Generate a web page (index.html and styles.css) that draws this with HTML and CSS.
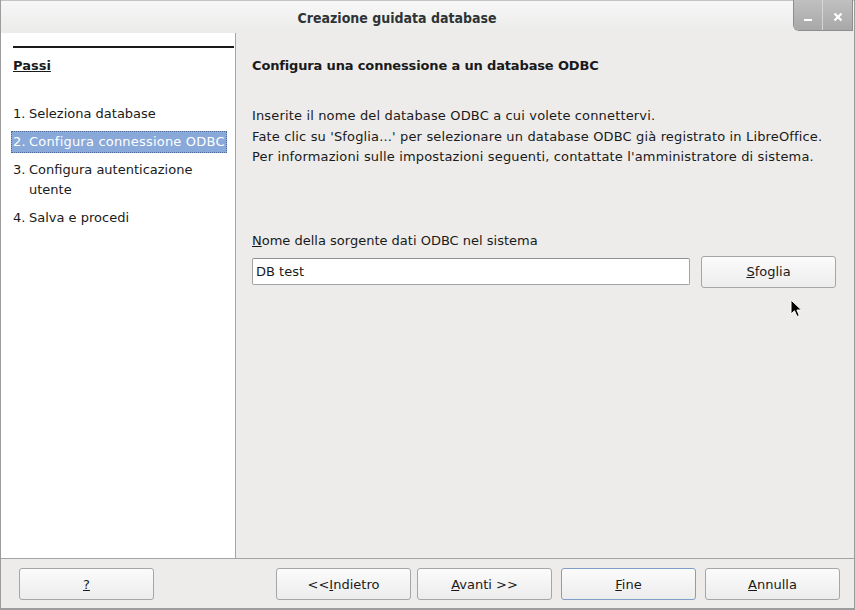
FILE: index.html
```html
<!DOCTYPE html>
<html lang="it">
<head>
<meta charset="utf-8">
<title>Creazione guidata database</title>
<link rel="stylesheet" href="styles.css">
</head>
<body>
<div class="window">
  <div class="titlebar">
    <div class="title">Creazione guidata database</div>
    <div class="controls">
      <div class="ctl ctl-min"><svg width="10" height="10" viewBox="0 0 10 10"><rect x="1" y="7" width="8" height="2" fill="#fff"/></svg></div>
      <div class="ctl ctl-close"><svg width="10" height="10" viewBox="0 0 10 10"><path d="M1.5 1.5 L8.5 8.5 M8.5 1.5 L1.5 8.5" stroke="#fff" stroke-width="2.2" fill="none"/></svg></div>
    </div>
  </div>
  <div class="main">
    <div class="steps">
      <div class="steps-rule"></div>
      <div class="steps-title">Passi</div>
      <ol class="step-list">
        <li class="step"><span class="num">1.</span><span class="txt">Seleziona database</span></li>
        <li class="step active"><span class="num">2.</span><span class="txt">Configura connessione ODBC</span></li>
        <li class="step"><span class="num">3.</span><span class="txt">Configura autenticazione utente</span></li>
        <li class="step"><span class="num">4.</span><span class="txt">Salva e procedi</span></li>
      </ol>
    </div>
    <div class="content">
      <h1 class="heading">Configura una connessione a un database ODBC</h1>
      <p class="desc">Inserite il nome del database ODBC a cui volete connettervi.<br>Fate clic su 'Sfoglia...' per selezionare un database ODBC già registrato in LibreOffice.<br>Per informazioni sulle impostazioni seguenti, contattate l'amministratore di sistema.</p>
      <div class="field-label"><u>N</u>ome della sorgente dati ODBC nel sistema</div>
      <div class="field-row">
        <div class="input">DB test</div>
        <div class="btn btn-browse"><u>S</u>foglia</div>
      </div>
      <svg class="cursor" width="14" height="20" viewBox="0 0 14 20"><path d="M1 1 L1 15 L4.5 11.8 L7 17.5 L9.3 16.5 L6.9 11 L11.5 11 Z" fill="#000" stroke="#fff" stroke-width="1"/></svg>
    </div>
  </div>
  <div class="footer">
    <div class="btn btn-help"><u>?</u></div>
    <div class="nav">
      <div class="btn"><span>&lt;&lt;<u>I</u>ndietro</span></div>
      <div class="btn"><span><u>A</u>vanti &gt;&gt;</span></div>
      <div class="btn btn-focus"><span><u>F</u>ine</span></div>
      <div class="btn"><span><u>A</u>nnulla</span></div>
    </div>
  </div>
</div>
</body>
</html>
```

FILE: styles.css
```css
* { box-sizing: border-box; }
html, body { margin: 0; padding: 0; }
body {
  width: 855px;
  height: 610px;
  background: #edeceb;
  font-family: "DejaVu Sans", "Noto Sans", sans-serif;
  font-size: 13px;
  color: #2e3436;
  overflow: hidden;
}
.window {
  width: 855px;
  height: 610px;
  display: flex;
  flex-direction: column;
  border-left: 1px solid #9c9c9c;
  border-right: 1px solid #9c9c9c;
  border-bottom: 2px solid #9c9c9c;
  background: #edeceb;
}
.titlebar {
  height: 33px;
  display: flex;
  align-items: flex-start;
  background: linear-gradient(#f7f7f7, #ebebea);
  border-top: 1px solid #c4c4c4;
}
.title {
  flex: 1;
  text-align: center;
  font-family: "DejaVu Sans Condensed", "DejaVu Sans", sans-serif;
  font-weight: bold;
  font-size: 14px;
  color: #2e3436;
  line-height: 35px;
}
.controls {
  display: flex;
  margin-right: 1px;
  margin-top: -1px;
  height: 31px;
  border-radius: 0 0 0 6px;
  overflow: hidden;
  border: 1px solid #8e8e8e;
  border-top: none;
}
.ctl {
  width: 29px;
  height: 30px;
  display: flex;
  align-items: center;
  justify-content: center;
  background: linear-gradient(#c0c0c0, #a8a8a8);
}
.ctl-min { border-right: 1px solid #d6d6d6; padding-top: 4px; }
.ctl-close { padding-top: 3px; }
.main {
  flex: 1;
  display: flex;
  border-bottom: 1px solid #a3a3a3;
}
.steps {
  width: 235px;
  background: #ffffff;
  border-right: 1px solid #a5a5a5;
  padding: 13px 1px 0 11px;
}
.steps-rule {
  height: 2px;
  background: #1a1a1a;
  margin-left: 1px;
}
.steps-title {
  font-weight: bold;
  text-decoration: underline;
  color: #1a1a1a;
  margin-top: 8px;
  margin-left: 1px;
  line-height: 20px;
}
.step-list {
  list-style: none;
  margin: 27px 0 0 0;
  padding: 0;
  display: flex;
  flex-direction: column;
  gap: 6px;
  color: #1a1a1a;
}
.step {
  display: flex;
  line-height: 20px;
  padding-left: 1px;
  width: 216px;
  border: 1px dotted transparent;
  margin-left: -1px;
}
.step .num { width: 16px; flex: none; }
.step .txt { flex: 1; }
.step.active {
  background: #88a9d9;
  color: #ffffff;
  border-color: #4a6a9a;
  letter-spacing: 0.2px;
}
.content {
  flex: 1;
  position: relative;
  padding: 22px 18px 0 16px;
}
.heading {
  margin: 0;
  font-size: 13px;
  font-weight: bold;
  color: #1a1a1a;
  line-height: 22px;
  letter-spacing: -0.15px;
}
.desc {
  margin: 29px 0 0 0;
  line-height: 20.5px;
  color: #1a1a1a;
  letter-spacing: 0.15px;
}
.field-label {
  margin-top: 63px;
  line-height: 20px;
  color: #1a1a1a;
}
.field-row {
  display: flex;
  align-items: center;
  gap: 11px;
  margin-top: 5px;
}
.input {
  width: 438px;
  height: 27px;
  background: #ffffff;
  border: 1px solid #a3a3a3;
  border-top-color: #8f8f8f;
  border-radius: 2px;
  padding-left: 3px;
  line-height: 25px;
  color: #1a1a1a;
}
.btn {
  height: 32px;
  width: 135px;
  display: flex;
  align-items: center;
  justify-content: center;
  border: 1px solid #a6a6a6;
  border-radius: 3px;
  background: linear-gradient(#fbfbfb, #ececec);
  color: #1a1a1a;
}
.btn u { text-decoration: underline; }
.cursor {
  position: absolute;
  left: 554px;
  top: 266px;
}
.footer {
  height: 49px;
  display: flex;
  align-items: center;
  padding: 1px 14px 0 18px;
}
.btn-help { margin-right: auto; }
.nav {
  display: flex;
  gap: 6px;
}
.nav .btn:nth-child(3) { margin-left: 3px; margin-right: 3px; }
.btn-focus {
  border-color: #7f9fc9;
}
```
